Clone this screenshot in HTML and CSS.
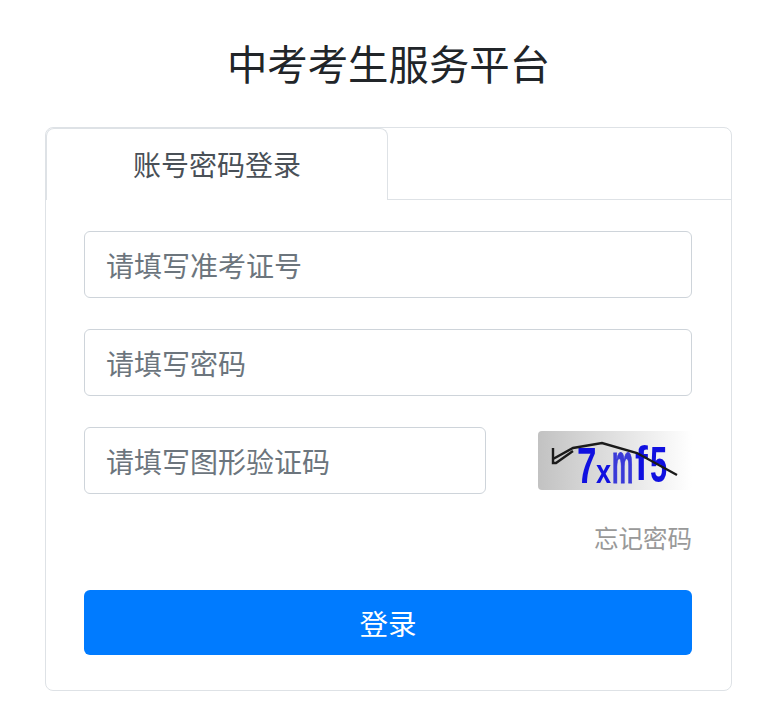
FILE: index.html
```html
<!DOCTYPE html>
<html>
<head>
    <meta charset="utf-8">
    <title>中考考生服务平台</title>
    <link rel="stylesheet" href="styles.css">
</head>
<body>
    <div class="wrap">
        <h1 class="title">中考考生服务平台</h1>
        <div class="card">
            <div class="tabs">
                <div class="tab">账号密码登录</div>
            </div>
            <form class="form" onsubmit="return false">
                <input class="field" type="text" placeholder="请填写准考证号">
                <input class="field" type="password" placeholder="请填写密码">
                <div class="captcha-row">
                    <input class="field captcha-field" type="text" placeholder="请填写图形验证码">
                    <svg class="captcha" viewBox="0 0 154 59" width="154" height="59">
                        <defs>
                            <linearGradient id="captcha-bg" x1="0" y1="0" x2="1" y2="0">
                                <stop offset="0" stop-color="#c2c2c2"/>
                                <stop offset="1" stop-color="#ffffff"/>
                            </linearGradient>
                        </defs>
                        <rect width="154" height="59" rx="4" fill="url(#captcha-bg)"/>
                        <g class="captcha-text">
                            <text transform="translate(39 52) scale(.7 1)" font-size="50">7</text>
                            <text transform="translate(58 52) scale(.8 1)" font-size="34">x</text>
                            <text transform="translate(74 52) scale(.42 1)" font-size="57" class="smear">m</text>
                            <text transform="translate(97 49) scale(.8 1)" font-size="48">f</text>
                            <text transform="translate(112 51) scale(.62 1)" font-size="50">5</text>
                        </g>
                        <path class="captcha-line" d="M15 17 L15 32 L18 32 L35 20 M15 28 L35 17 L64 12 L99 22 L139 44"/>
                    </svg>
                </div>
                <div class="forgot-row">
                    <a class="forgot" href="#">忘记密码</a>
                </div>
                <button class="submit" type="submit">登录</button>
            </form>
        </div>
    </div>
</body>
</html>
```

FILE: styles.css
```css
* {
    box-sizing: border-box;
    margin: 0;
    padding: 0;
}

body {
    font-family: "Liberation Sans", "Noto Sans CJK SC", sans-serif;
    background-color: #fff;
    color: #212529;
}

.wrap {
    width: 687px;
    margin-left: 45px;
    padding-top: 36px;
}

.title {
    font-size: 40.4px;
    font-weight: 400;
    line-height: 60px;
    text-align: center;
    margin-bottom: 31px;
}

.card {
    height: 564px;
    border: 1px solid #dee2e6;
    border-radius: 8px;
}

.tabs {
    height: 72px;
    border-bottom: 1px solid #dee2e6;
}

.tab {
    width: 342px;
    height: 72px;
    background: #fff;
    border: 1px solid #dee2e6;
    border-bottom: none;
    border-radius: 8px 8px 0 0;
    font-size: 28px;
    line-height: 76px;
    text-align: center;
    color: #495057;
}

.form {
    padding: 31px 39px 0 38px;
}

.field {
    display: block;
    width: 100%;
    height: 67px;
    padding: 6px 21px 0;
    margin-bottom: 31px;
    border: 1px solid #ced4da;
    border-radius: 6px;
    background: #fff;
    color: #495057;
    font-family: inherit;
    font-size: 28px;
}

.field::placeholder {
    color: #6c757d;
    opacity: 1;
}

.captcha-row {
    display: flex;
    justify-content: space-between;
    align-items: center;
}

.captcha-field {
    width: 402px;
    margin-bottom: 0;
}

.captcha {
    display: block;
    filter: blur(0.4px);
}

.captcha-text text {
    font-family: "Liberation Sans", sans-serif;
    font-weight: 700;
    fill: #1010e0;
}

.captcha-text .smear {
    fill: #3a3ad8;
    stroke: #3a3ad8;
    stroke-width: 1;
}

.captcha-line {
    fill: none;
    stroke: #1a1a1a;
    stroke-width: 2.4;
}

.forgot-row {
    margin-top: 28px;
    height: 40px;
    text-align: right;
}

.forgot {
    font-size: 24.5px;
    line-height: 36px;
    color: #999;
    text-decoration: none;
}

.submit {
    display: block;
    width: 100%;
    height: 65px;
    margin-top: 28px;
    border: none;
    border-radius: 6px;
    background-color: #007bff;
    color: #fff;
    font-family: inherit;
    font-size: 28.5px;
    cursor: pointer;
}
```
